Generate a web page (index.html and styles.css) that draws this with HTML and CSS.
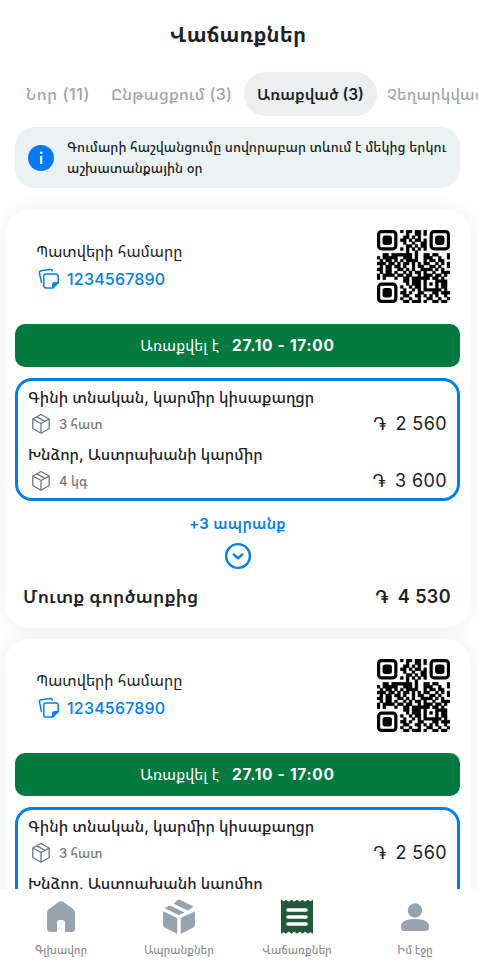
FILE: index.html
```html
<!DOCTYPE html>
<html lang="hy">
<head>
<meta charset="utf-8">
<title>Վաճառքներ</title>
<link rel="stylesheet" href="styles.css">
</head>
<body>
<svg class="defs" width="0" height="0">
  <symbol id="copy" viewBox="0 0 22 22"><g fill="none" stroke="currentColor" stroke-width="1.5" stroke-linecap="round" stroke-linejoin="round"><path d="M3.500 14.500 1.500 5.200Q1.100 3.200 3 2.800L12.400 1.500Q14 1.300 14.400 3"/><path d="M20.200 14.500V8.300Q20.200 6 18 6H8Q5.800 6 5.800 8.200V17.800Q5.800 20 8 20H14.800Z"/><path d="M20 14.800H16.500Q14.800 14.800 14.800 16.500V19.600Z" fill="currentColor"/></g></symbol>
  <symbol id="box" viewBox="0 0 20 22"><g fill="none" stroke="#6d747a" stroke-width="1.300" stroke-linejoin="round" stroke-linecap="round"><path d="M10 1.500 18.200 6V15.500L10 20.200 1.800 15.500V6ZM1.800 6 10 10.500 18.200 6M10 10.500V20M5.800 3.900 14 8.400"/></g></symbol>
  <symbol id="qr" viewBox="0 0 25 25"><path id="qrpath" stroke="#000" stroke-width=".12" stroke-linejoin="round"/><g id="finders"><g id="finder"><rect x=".55" y=".55" width="5.900" height="5.900" rx="1" fill="none" stroke="#000" stroke-width="1.100"/><rect x="1.900" y="1.900" width="3.200" height="3.200" rx=".9"/></g><use href="#finder" x="18"/><use href="#finder" y="18"/></g></symbol>
</svg>
<div class="app">
  <header><h1>Վաճառքներ</h1></header>
  <nav class="tabs">
    <span class="tab t1">Նոր (11)</span><span class="tab t2">Ընթացքում (3)</span><span class="tab active">Առաքված (3)</span><span class="tab t4">Չեղարկված</span>
  </nav>
  <div class="info">
    <svg width="26" height="26" viewBox="0 0 26 26"><circle cx="13" cy="13" r="13" fill="#007bff"/><circle cx="13.200" cy="7.700" r="1.300" fill="#fff"/><path d="M13.200 11V19" stroke="#fff" stroke-width="2.200"/></svg>
    <p>Գումարի հաշվանցումը սովորաբար տևում է մեկից երկու<br><span>աշխատանքային օր</span></p>
  </div>
  <main>
    <article class="card">
      <div class="order">
        <div><div class="label">Պատվերի համարը</div><div class="number"><svg width="22" height="22"><use href="#copy"/></svg><span>1234567890</span></div></div>
        <svg class="qr" width="73" height="73"><use href="#qr"/></svg>
      </div>
      <div class="status"><span>Առաքվել է</span><b>27.10 - 17:00</b></div>
      <div class="items">
        <div class="name">Գինի տնական, կարմիր կիսաքաղցր</div>
        <div class="line"><svg width="20" height="22"><use href="#box"/></svg><span class="qty">3 հատ</span><span class="price"><i>֏</i>2 560</span></div>
        <div class="name">Խնձոր, Աստրախանի կարմիր</div>
        <div class="line"><svg width="20" height="22"><use href="#box"/></svg><span class="qty">4 կգ</span><span class="price"><i>֏</i>3 600</span></div>
      </div>
      <div class="more">+3 ապրանք</div>
      <svg class="down" width="28" height="28" viewBox="0 0 28 28" fill="none" stroke="#0080f0" stroke-width="2.400"><circle cx="14" cy="14" r="11.900"/><path d="M9.800 12.400 14 16.300 18.200 12.400" stroke-linecap="round" stroke-linejoin="round"/></svg>
      <div class="total"><span>Մուտք գործարքից</span><span class="price"><i>֏</i>4 530</span></div>
    </article>
    <article class="card">
      <div class="order">
        <div><div class="label">Պատվերի համարը</div><div class="number"><svg width="22" height="22"><use href="#copy"/></svg><span>1234567890</span></div></div>
        <svg class="qr" width="73" height="73"><use href="#qr"/></svg>
      </div>
      <div class="status"><span>Առաքվել է</span><b>27.10 - 17:00</b></div>
      <div class="items">
        <div class="name">Գինի տնական, կարմիր կիսաքաղցր</div>
        <div class="line"><svg width="20" height="22"><use href="#box"/></svg><span class="qty">3 հատ</span><span class="price"><i>֏</i>2 560</span></div>
        <div class="name">Խնձոր, Աստրախանի կարմիր</div>
      </div>
    </article>
  </main>
  <footer>
    <div class="dest"><svg width="32" height="36" viewBox="0 0 32 36"><path fill="#97a3ad" d="M14 2.800Q16 1.500 18 2.800L28 10Q30 11.500 30 14V29.500Q30 33 26.500 33H21.500Q20 33 20 31.500V24Q20 21 17.500 21H14.500Q12 21 12 24V31.500Q12 33 10.500 33H5.500Q2 33 2 29.500V14Q2 11.500 4 10Z"/></svg><span>Գլխավոր</span></div>
    <div class="dest"><svg width="34" height="36" viewBox="0 0 34 36"><g fill="#97a3ad"><path d="M1 12.300 15.300 19V34.800L3 28.800Q1 27.800 1 25.500ZM33 12.300 18.700 19V34.800L31 28.800Q33 27.800 33 25.500ZM2.500 9 8 6.600 22.500 13.500 17 16.300ZM11.500 4.800 15.500 1Q17 .300 18.500 1L31.500 7.500 26 11.500Z"/></g></svg><span>Ապրանքներ</span></div>
    <div class="dest"><svg width="34" height="36" viewBox="0 0 34 36"><path fill="#23573b" d="M1 .500 3.500 2.500 6 .800 8.700 2.800 11.500 .800 14.300 2.800 17 .800 19.800 2.800 22.500 .800 25.300 2.800 28 .800 30.500 2.500 33 .500V35L30.500 33 28 34.700 25.300 32.500 22.500 34.700 19.800 32.500 17 34.700 14.300 32.500 11.500 34.700 8.700 32.500 6 34.700 3.500 33 1 35Z"/><path d="M8 11H26M8 18H26M8 25H26" stroke="#fff" stroke-width="3.600" stroke-linecap="round"/></svg><span>Վաճառքներ</span></div>
    <div class="dest"><svg width="30" height="36" viewBox="0 0 30 36"><g fill="#97a3ad"><circle cx="15" cy="11.500" r="7.200"/><path d="M1 27.500Q1 20 15 20T29 27.500V28.500Q29 32 25.500 32H4.500Q1 32 1 28.500Z"/></g></svg><span>Իմ էջը</span></div>
  </footer>
</div>
<script src="qr.js"></script>
</body>
</html>
```
FILE: styles.css
```css
*{box-sizing:border-box}
body{margin:0;background:#fefefe;color:#202124;font-family:Inter,"Noto Sans Armenian","DejaVu Sans",sans-serif}
.defs{position:absolute}
.app{width:478px;height:976px;display:flex;flex-direction:column;overflow:hidden}
header{height:70px;flex:none;display:flex;align-items:center;justify-content:center}
h1{margin:0;font-size:20.500px;line-height:28px;font-weight:700;letter-spacing:.1px;white-space:nowrap;padding-right:2px}
.tabs{height:44px;margin-top:2px;flex:none;display:flex;align-items:center;white-space:nowrap;font-size:16px;font-weight:500;color:#a0a5aa;letter-spacing:.4px;padding-left:26px}
.tab{flex:none}
.t1{width:85px;letter-spacing:.6px}
.t2{width:133px;letter-spacing:.3px}
.t4{font-size:15.500px;letter-spacing:.2px}
.active{width:133px;height:44px;border-radius:22px;background:#eceeef;color:#202124;font-size:15.500px;font-weight:600;letter-spacing:0;display:flex;align-items:center;justify-content:center;margin-right:10px}
.info{margin:11px 18px 0 15px;height:61px;flex:none;border-radius:20px;background:#eaf2f3;display:flex;align-items:center;padding-left:13px;gap:13px}
.info svg{flex:none}
.info p{margin:0;font-size:13.200px;line-height:21px;font-weight:500;white-space:nowrap;letter-spacing:.05px}
main{flex:1;min-height:0;overflow:hidden;padding:22px 8px 0 5px;display:flex;flex-direction:column;gap:11px}
.card{flex:none;height:418px;border-radius:24px;background:#fff;box-shadow:0 0 22px rgba(0,0,0,.06);padding:0 10px;display:flex;flex-direction:column}
.order{height:114px;flex:none;display:flex;justify-content:space-between;padding:20px 10px 0 21px}
.label{font-size:15.400px;line-height:24px;margin-top:10px;white-space:nowrap}
.number{display:flex;align-items:center;gap:7px;margin-top:4px;padding-left:2px;color:#0080f0;font-size:16px;line-height:22px;font-weight:500;letter-spacing:.2px}
.status{height:43px;flex:none;border-radius:10px;background:#007a3f;color:#fff;display:flex;align-items:center;justify-content:center;gap:13px;font-size:15px;padding-bottom:1px}
.status span{letter-spacing:.1px}
.status b{font-size:15.500px;font-weight:700;letter-spacing:.7px}
.items{margin-top:11px;height:123px;flex:none;border:3px solid #0080f0;border-radius:17px;padding:5px 10px 0}
.name{height:24px;line-height:24px;font-size:15.500px;font-weight:500;white-space:nowrap}
.line{height:28px;margin-bottom:5px;display:flex;align-items:center;padding-left:3px}
.line svg{margin-bottom:1px}
.line .price{margin-bottom:2px}
.qty{margin-left:8px;font-size:13px;font-weight:500;color:#777}
.price{margin-left:auto;font-size:18px;letter-spacing:.4px;white-space:nowrap}
i{font-style:normal;margin-right:9px}
.more{margin-top:11px;height:24px;line-height:24px;text-align:center;color:#0080f0;font-size:15px;font-weight:600;letter-spacing:.3px}
.down{align-self:center;margin-top:6px;flex:none}
.total{height:28px;margin-top:12px;display:flex;align-items:center;padding:0 9px 0 8px;font-size:18px;font-weight:600;letter-spacing:.15px;white-space:nowrap}
footer{height:87px;flex:none;background:#fff;display:grid;grid-template-columns:118px 118px 118px 118px;padding:10px 0 0 2px;position:relative}
.dest{display:flex;flex-direction:column;align-items:center;font-size:11px;font-weight:500;line-height:16px;color:#8d8d8d;white-space:nowrap}
.dest span{margin-top:7px}
```
FILE: qr.js
```js
const rows = [
  "........#.##.##.#........",
  "..........#..##.#........",
  ".........##.#.#..........",
  "........##.#.##.#........",
  ".........#..#..##........",
  "..........##.#.##........",
  "........#.#.#.#.#........",
  "..........#..#...........",
  "..##.#######.#..##.##...#",
  "#.#####..###.#..###..#..#",
  ".#.##.#.#.####..#.##.##..",
  "###.##.#.##.#.#.##..#.#.#",
  ".#.##.##.#..#.##..##.#..#",
  "##.##..##.#.#..####.#.#..",
  ".#.##.#..#.#.##.#..#..###",
  "#.####.##.##..#.###.##.#.",
  "#.#...#..##.######.##.#..",
  ".........##.###.#...####.",
  "..........#.###.#.#.#.##.",
  "........#..#.##.#...#.##.",
  ".........#..#.#.######.#.",
  "........##.#..##...##.###",
  ".........##..##.#.#.#..#.",
  "........#..#..#..##..#..#",
  ".........##.###.#..##.##."
];
let d = "";
rows.forEach((row, y) => {
  for (let x = 0; x < 25; x++) if (row[x] === "#") d += `M${x} ${y}h1v1h-1z`;
});
document.getElementById("qrpath").setAttribute("d", d);
```
